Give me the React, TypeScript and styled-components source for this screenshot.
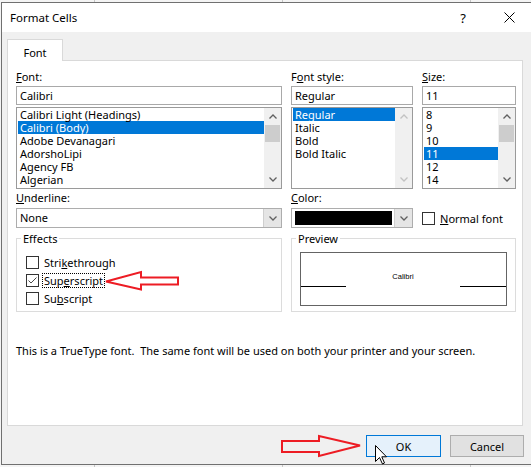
import React from "react";
import styled, { createGlobalStyle } from "styled-components";

const GlobalStyle = createGlobalStyle`
  html, body {
    margin: 0;
    padding: 0;
  }

  body {
    width: 531px;
    height: 467px;
    overflow: hidden;
    background-color: #f4f4f4;
    background-image: repeating-linear-gradient(
      90deg,
      transparent 0 94px,
      #c6c6c6 94px 95px,
      transparent 95px 188px
    );
    font-family: "Segoe UI", "Noto Sans", sans-serif;
    font-size: 11px;
    color: #000;
  }
`;

const Window = styled.div`
  position: relative;
  margin: 2px 0 0 1px;
  width: 530px;
  height: 461px;
  border: 1px solid #707070;
  border-right: none;
  background: #f0f0f0;
  display: flex;
  flex-direction: column;
`;

const TitleBar = styled.div`
  height: 29px;
  background: #fff;
  display: flex;
  align-items: center;
  padding-left: 8px;
`;

const Title = styled.span`
  flex: 1;
  font-size: 11.5px;
`;

const TitleButton = styled.div`
  width: 46px;
  height: 29px;
  display: flex;
  align-items: center;
  justify-content: center;
  font-size: 13px;
`;

const Body = styled.div`
  flex: 1;
  padding: 7px 0 0 5px;
  display: flex;
  flex-direction: column;
`;

const Tab = styled.div`
  position: relative;
  z-index: 1;
  width: 56px;
  height: 22px;
  box-sizing: border-box;
  border: 1px solid #d9d9d9;
  border-bottom: none;
  background: #fff;
  text-align: center;
  line-height: 14px;
  padding-top: 6px;
`;

const Panel = styled.div`
  width: 516px;
  height: 366px;
  margin-top: -1px;
  box-sizing: border-box;
  border: 1px solid #d9d9d9;
  background: #fff;
  padding: 9px 8px 0 8px;
`;

const Grid = styled.div`
  display: grid;
  grid-template-columns: 266px 122px 94px;
  column-gap: 9px;
`;

const Field = styled.div`
  display: flex;
  flex-direction: column;
`;

const Label = styled.div<{ $top?: number; $bottom?: number }>`
  height: 14px;
  line-height: 14px;
  margin-top: ${(p) => p.$top ?? 0}px;
  margin-bottom: ${(p) => p.$bottom ?? 2}px;
  white-space: nowrap;
`;

const TextBox = styled.div`
  height: 19px;
  box-sizing: border-box;
  border: 1px solid #a9a9a9;
  padding-left: 3px;
  line-height: 17px;
`;

const ListBox = styled.div`
  margin-top: 2px;
  height: 82px;
  box-sizing: border-box;
  border: 1px solid #9a9a9a;
  display: flex;
`;

const Items = styled.div`
  flex: 1;
  padding-left: 1px;
  overflow: hidden;
`;

const Item = styled.div<{ $selected?: boolean }>`
  height: 13px;
  line-height: 13px;
  padding-left: 2px;
  white-space: nowrap;
  background: ${(p) => (p.$selected ? "#0078d7" : "transparent")};
  color: ${(p) => (p.$selected ? "#fff" : "#000")};
`;

const ScrollBar = styled.div`
  width: 17px;
  background: #f0f0f0;
  display: flex;
  flex-direction: column;
`;

const ScrollArrow = styled.div`
  height: 17px;
  display: flex;
  align-items: center;
  justify-content: center;
`;

const Thumb = styled.div`
  height: 17px;
  margin: 0 1px;
  background: #cdcdcd;
`;

const Track = styled.div`
  flex: 1;
`;

const Combo = styled.div`
  height: 20px;
  box-sizing: border-box;
  border: 1px solid #adadad;
  background: #fff;
  display: flex;
`;

const ComboValue = styled.div`
  flex: 1;
  padding-left: 3px;
  line-height: 18px;
`;

const Swatch = styled.div`
  flex: 1;
  margin: 2px 2px 2px 3px;
  background: #000;
`;

const ComboButton = styled.div`
  width: 17px;
  background: #e5e5e5;
  border-left: 1px solid #cfcfcf;
  display: flex;
  align-items: center;
  justify-content: center;
`;

const CheckRow = styled.div<{ $h?: number }>`
  height: ${(p) => p.$h ?? 18}px;
  display: flex;
  align-items: center;
  gap: 4px;
`;

const Box = styled.div`
  width: 13px;
  height: 13px;
  box-sizing: border-box;
  border: 1px solid #333;
  background: #fff;
  display: flex;
  align-items: center;
  justify-content: center;
`;

const CheckLabel = styled.span<{ $focused?: boolean }>`
  line-height: 13px;
  padding: 0 1px;
  outline: ${(p) => (p.$focused ? "1px dotted #000" : "none")};
`;

const NormalFont = styled.div`
  align-self: end;
  height: 20px;
  display: flex;
  align-items: center;
`;

const Group = styled.div<{ $span?: boolean }>`
  grid-column: ${(p) => (p.$span ? "2 / 4" : "auto")};
  margin-top: 10px;
  height: 74px;
  box-sizing: border-box;
  border: 1px solid #dcdcdc;
  display: flex;
  flex-direction: column;
`;

const Legend = styled.div`
  align-self: flex-start;
  margin: -7px 0 0 4px;
  padding: 0 2px;
  height: 14px;
  line-height: 14px;
  background: #fff;
`;

const Checks = styled.div`
  margin-top: 7px;
  padding-left: 9px;
`;

const PreviewBox = styled.div`
  margin: 6px 8px 0 8px;
  height: 54px;
  box-sizing: border-box;
  border: 1px solid #646464;
  display: flex;
  align-items: flex-end;
  padding-bottom: 18px;
`;

const Baseline = styled.div<{ $w: number }>`
  width: ${(p) => p.$w}px;
  border-bottom: 1px solid #000;
`;

const Sample = styled.div`
  flex: 1;
  text-align: center;
  font-family: "Liberation Sans", sans-serif;
  font-size: 7.5px;
  line-height: 9px;
  margin-bottom: 6px;
`;

const Info = styled.div`
  margin-top: 32px;
  line-height: 14px;
  white-space: pre;
`;

const ButtonRow = styled.div`
  width: 517px;
  margin-top: 9px;
  display: flex;
  justify-content: flex-end;
  gap: 9px;
`;

const Button = styled.div<{ $primary?: boolean; $w: number }>`
  width: ${(p) => p.$w}px;
  height: 22px;
  box-sizing: border-box;
  border: 1px solid ${(p) => (p.$primary ? "#0078d7" : "#adadad")};
  background: ${(p) => (p.$primary ? "#e5f1fb" : "#e1e1e1")};
  display: flex;
  align-items: center;
  justify-content: center;
`;

const Overlay = styled.svg<{ $x: number; $y: number }>`
  position: absolute;
  left: ${(p) => p.$x - 2}px;
  top: ${(p) => p.$y - 3}px;
  overflow: visible;
`;

function Chevron({ up, disabled }: { up?: boolean; disabled?: boolean }) {
  return (
    <svg width="8" height="5" viewBox="0 0 8 5">
      <polyline
        points={up ? "0.5,4.5 4,1 7.5,4.5" : "0.5,0.5 4,4 7.5,0.5"}
        fill="none"
        stroke={disabled ? "#c2c2c2" : "#606060"}
        strokeWidth="1.3"
      />
    </svg>
  );
}

function List({
  items,
  selected,
  thumb,
}: {
  items: string[];
  selected: number;
  thumb: boolean;
}) {
  return (
    <ListBox>
      <Items>
        {items.map((it, i) => (
          <Item key={it} $selected={i === selected}>
            {it}
          </Item>
        ))}
      </Items>
      <ScrollBar>
        <ScrollArrow>
          <Chevron up disabled={!thumb} />
        </ScrollArrow>
        {thumb && <Thumb />}
        <Track />
        <ScrollArrow>
          <Chevron disabled={!thumb} />
        </ScrollArrow>
      </ScrollBar>
    </ListBox>
  );
}

function Check({ checked }: { checked?: boolean }) {
  return (
    <Box>
      {checked && (
        <svg width="11" height="11" viewBox="0 0 11 11">
          <polyline
            points="1.5,5.5 4,8 9.5,2.5"
            fill="none"
            stroke="#4a4a4a"
            strokeWidth="1"
          />
        </svg>
      )}
    </Box>
  );
}

export default function App() {
  return (
    <>
      <GlobalStyle />
      <Window>
        <TitleBar>
          <Title>Format Cells</Title>
          <TitleButton>?</TitleButton>
          <TitleButton>
            <svg width="11" height="11" viewBox="0 0 11 11">
              <path d="M0.5 0.5 L10.5 10.5 M10.5 0.5 L0.5 10.5" stroke="#000" strokeWidth="1" />
            </svg>
          </TitleButton>
        </TitleBar>
        <Body>
          <Tab>Font</Tab>
          <Panel>
            <Grid>
              <Field>
                <Label>
                  <u>F</u>ont:
                </Label>
                <TextBox>Calibri</TextBox>
                <List
                  items={[
                    "Calibri Light (Headings)",
                    "Calibri (Body)",
                    "Adobe Devanagari",
                    "AdorshoLipi",
                    "Agency FB",
                    "Algerian",
                  ]}
                  selected={1}
                  thumb
                />
              </Field>
              <Field>
                <Label>
                  F<u>o</u>nt style:
                </Label>
                <TextBox>Regular</TextBox>
                <List
                  items={["Regular", "Italic", "Bold", "Bold Italic"]}
                  selected={0}
                  thumb={false}
                />
              </Field>
              <Field>
                <Label>
                  <u>S</u>ize:
                </Label>
                <TextBox>11</TextBox>
                <List items={["8", "9", "10", "11", "12", "14"]} selected={3} thumb />
              </Field>

              <Field>
                <Label $top={2} $bottom={3}>
                  <u>U</u>nderline:
                </Label>
                <Combo>
                  <ComboValue>None</ComboValue>
                  <ComboButton>
                    <Chevron />
                  </ComboButton>
                </Combo>
              </Field>
              <Field>
                <Label $top={2} $bottom={3}>
                  <u>C</u>olor:
                </Label>
                <Combo>
                  <Swatch />
                  <ComboButton>
                    <Chevron />
                  </ComboButton>
                </Combo>
              </Field>
              <NormalFont>
                <CheckRow $h={20}>
                  <Check />
                  <CheckLabel>
                    <u>N</u>ormal font
                  </CheckLabel>
                </CheckRow>
              </NormalFont>

              <Group>
                <Legend>Effects</Legend>
                <Checks>
                  <CheckRow>
                    <Check />
                    <CheckLabel>
                      Stri<u>k</u>ethrough
                    </CheckLabel>
                  </CheckRow>
                  <CheckRow>
                    <Check checked />
                    <CheckLabel $focused>
                      Sup<u>e</u>rscript
                    </CheckLabel>
                  </CheckRow>
                  <CheckRow>
                    <Check />
                    <CheckLabel>
                      Su<u>b</u>script
                    </CheckLabel>
                  </CheckRow>
                </Checks>
              </Group>
              <Group $span>
                <Legend>Preview</Legend>
                <PreviewBox>
                  <Baseline $w={45} />
                  <Sample>Calibri</Sample>
                  <Baseline $w={46} />
                </PreviewBox>
              </Group>
            </Grid>
            <Info>
              This is a TrueType font.  The same font will be used on both your printer and your screen.
            </Info>
          </Panel>
          <ButtonRow>
            <Button $primary $w={75}>
              OK
            </Button>
            <Button $w={74}>Cancel</Button>
          </ButtonRow>
        </Body>

        <Overlay $x={100} $y={268} width="82" height="26" viewBox="0 0 82 26">
          <polygon
            points="6,13.5 41,4 41,9.5 78,9.5 78,16.5 41,16.5 41,21.5"
            fill="none"
            stroke="#ed1c24"
            strokeWidth="2"
            strokeLinejoin="miter"
          />
        </Overlay>
        <Overlay $x={278} $y={432} width="86" height="28" viewBox="0 0 86 28">
          <polygon
            points="4,9 41,9 41,4 82,13.5 41,24 41,20 4,20"
            fill="none"
            stroke="#ed1c24"
            strokeWidth="2"
          />
        </Overlay>
        <Overlay $x={375} $y={445} width="13" height="20" viewBox="0 0 13 20">
          <path
            d="M0.5 0.5 L0.5 16.5 L4.5 12.5 L7.5 19 L9.5 18 L6.8 11.8 L11.5 11.8 Z"
            fill="#fff"
            stroke="#000"
            strokeWidth="1"
          />
        </Overlay>
      </Window>
    </>
  );
}
